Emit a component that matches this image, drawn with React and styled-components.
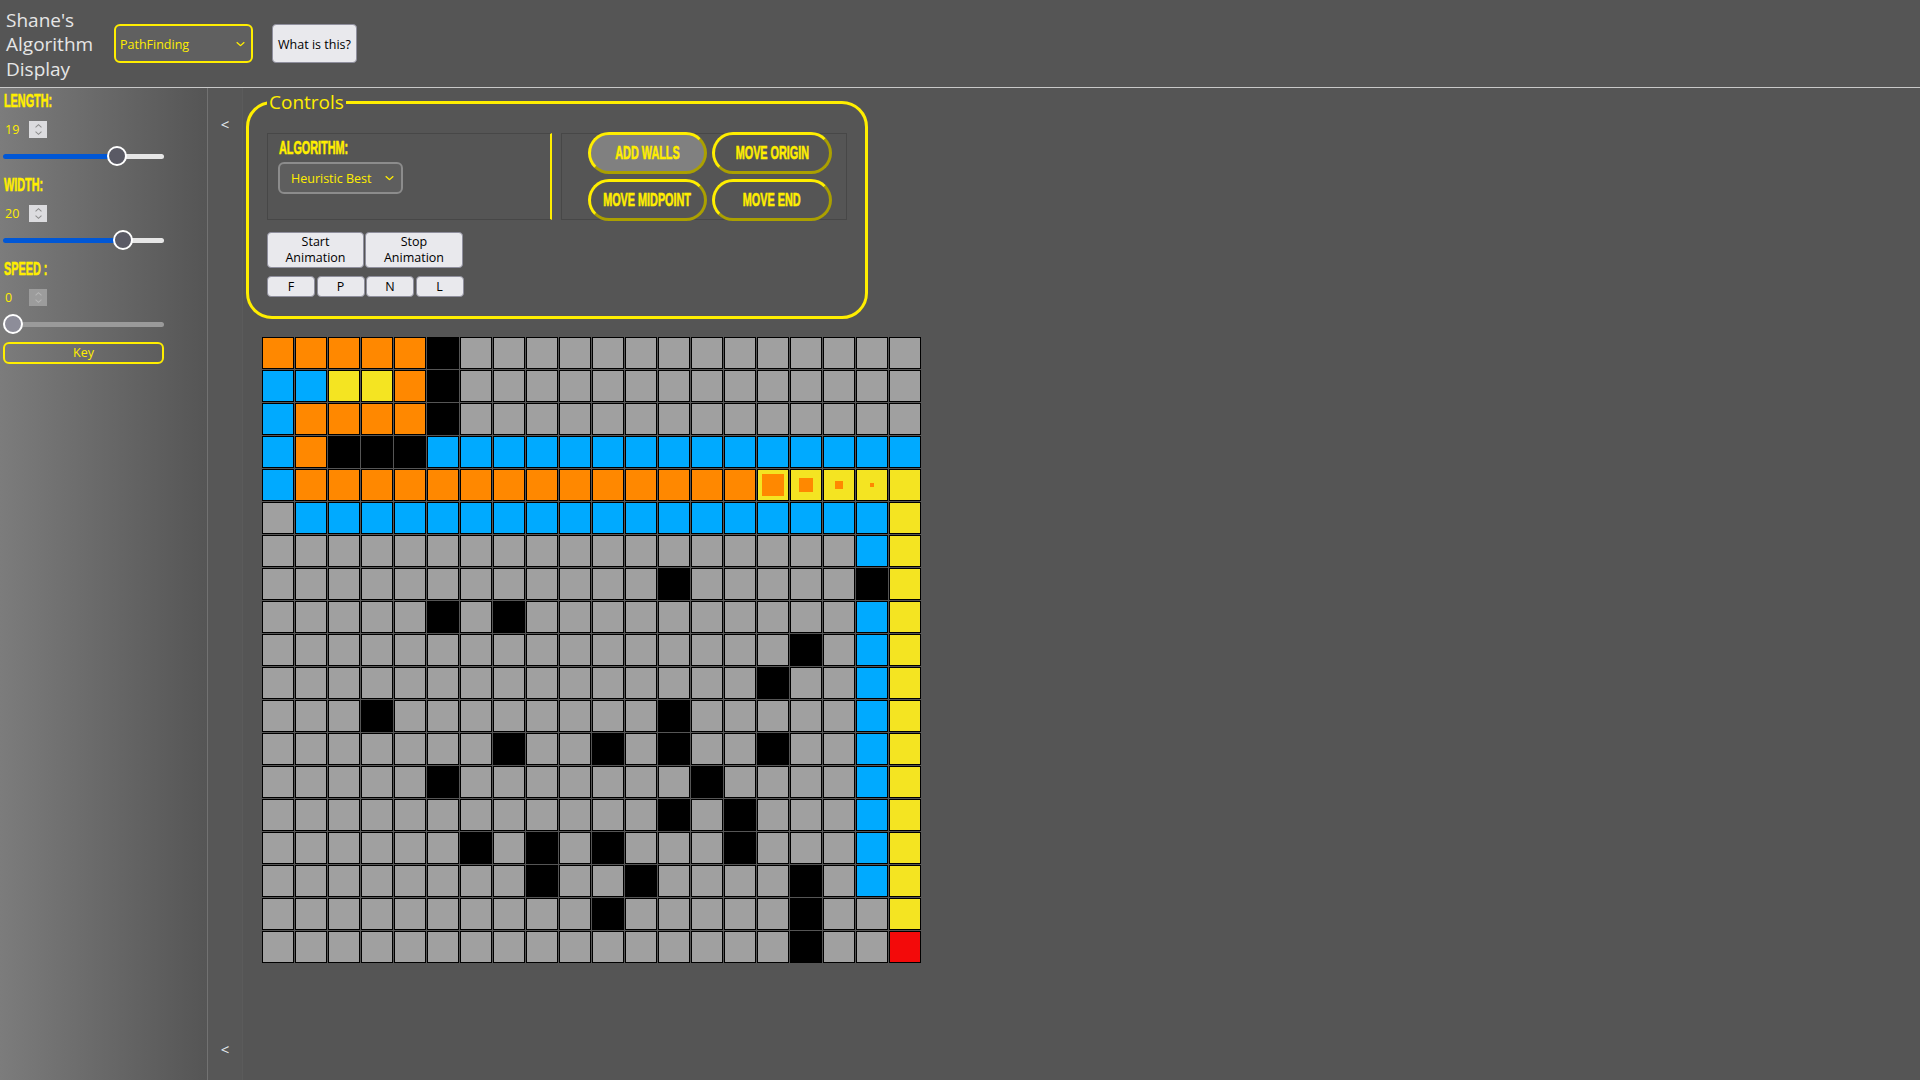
import React from 'react';
import styled, { createGlobalStyle, css } from 'styled-components';

const YELLOW = '#ffee00';

const GlobalStyle = createGlobalStyle`
  html, body {
    margin: 0;
    padding: 0;
    background: #555555;
  }
  body {
    font-family: "Open Sans", "Noto Sans", sans-serif;
    overflow: hidden;
  }
  * { box-sizing: border-box; }
`;

// condensed caps, the page uses a Bebas-like face
const display = css`
  font-family: "Liberation Sans", Arial, sans-serif;
  font-weight: 700;
  font-size: 19px;
  line-height: 20px;
  color: ${YELLOW};
  -webkit-text-stroke: 0.6px ${YELLOW};
`;

const Squeeze = styled.span`
  display: inline-block;
  white-space: nowrap;
  transform: scaleX(${p => p.$x || 0.57});
  transform-origin: ${p => p.$origin || 'left'} center;
`;

const Header = styled.header`
  height: 88px;
  display: flex;
  align-items: center;
  border-bottom: 1px solid #c9c9c9;
`;

const Title = styled.div`
  width: 96px;
  margin: 2px 12px 0 6px;
  color: #e6e6e6;
  font-size: 19px;
  line-height: 24.5px;
`;

const SelectWrap = styled.div`
  position: relative;
  display: inline-block;
  margin-top: ${p => p.$mt || 0}px;

  svg {
    position: absolute;
    right: ${p => p.$arrowRight || 8}px;
    top: 50%;
    transform: translateY(-50%);
    pointer-events: none;
  }
`;

const Select = styled.select`
  appearance: none;
  width: ${p => p.$w}px;
  height: ${p => p.$h}px;
  padding: 1px 20px 0 ${p => p.$pl}px;
  border: 2px solid ${p => p.$border};
  border-radius: 6px;
  background: ${p => p.$bg};
  color: ${YELLOW};
  font-family: "Open Sans", sans-serif;
  font-size: 12.5px;
  outline: none;
`;

const InfoButton = styled.button`
  margin-left: 19px;
  width: 85px;
  height: 39px;
  padding: 1px 0 0;
  background: #e9e9ed;
  border: 1px solid #8f8f9d;
  border-radius: 4px;
  color: #000;
  font-family: "Open Sans", sans-serif;
  font-size: 12.5px;
`;

const Workspace = styled.div`
  display: flex;
  height: calc(100vh - 88px);
`;

const Sidebar = styled.aside`
  width: 207px;
  flex: none;
  padding: 3px 0 0 3px;
  background: linear-gradient(to right, #7c7c7c, #555555);
`;

const Group = styled.div`
  margin-bottom: 9px;
`;

const Label = styled.div`
  ${display};
  height: 20px;
  padding-left: 1px;
`;

const NumberRow = styled.div`
  display: flex;
  align-items: center;
  height: 17px;
  margin-top: 10px;
  padding-left: 2px;
`;

const NumberValue = styled.span`
  width: 24px;
  font-size: 12.5px;
  color: ${YELLOW};
`;

const Spinner = styled.span`
  width: 18px;
  height: 17px;
  display: flex;
  flex-direction: column;
  align-items: center;
  justify-content: center;
  gap: 3px;
  background: ${p => (p.$disabled ? '#9c9c9c' : '#dcdcdf')};
`;

const SliderWrap = styled.div`
  position: relative;
  width: 161px;
  height: 20px;
  margin-top: 8px;
  display: flex;
  align-items: center;
`;

const Track = styled.div`
  width: 100%;
  height: 5px;
  border-radius: 3px;
`;

const Thumb = styled.span`
  position: absolute;
  top: 0;
  width: 20px;
  height: 20px;
  border-radius: 50%;
  border: 2px solid #fff;
  background: ${p => (p.$disabled ? '#8d8d99' : '#5a5a65')};
`;

const KeyButton = styled.button`
  display: block;
  width: 161px;
  height: 22px;
  margin-top: -1px;
  padding: 0;
  border: 2px solid ${YELLOW};
  border-radius: 6px;
  background: transparent;
  color: ${YELLOW};
  font-family: "Open Sans", sans-serif;
  font-size: 12.5px;
  line-height: 16px;
`;

const Rail = styled.div`
  width: 36px;
  flex: none;
  display: flex;
  flex-direction: column;
  justify-content: space-between;
  align-items: center;
  padding: 26px 0 21px;
  border-left: 1px solid #727272;
  border-right: 1px solid #5b5b5b;
  background: #575757;
`;

const RailArrow = styled.span`
  color: #e4eaf0;
  font-size: 15px;
  line-height: 20px;
`;

const Main = styled.main`
  flex: 1;
  padding-left: 3px;
`;

const Controls = styled.fieldset`
  width: 622px;
  min-width: 0;
  margin: 0;
  padding: 17px 18px 19px;
  border: 3px solid ${YELLOW};
  border-radius: 26px;
`;

const Legend = styled.legend`
  padding: 0 2px;
  color: ${YELLOW};
  font-size: 19px;
  line-height: 28px;
`;

const TopRow = styled.div`
  display: flex;
  gap: 9px;
`;

const AlgoBox = styled.div`
  width: 285px;
  height: 87px;
  padding: 4px 0 0 10px;
  border: 1px solid #474747;
  border-right: 2px solid ${YELLOW};
`;

const ModeGrid = styled.div`
  width: 286px;
  height: 87px;
  display: grid;
  grid-template-columns: 119px 120px;
  grid-auto-rows: 42px;
  gap: 5px;
  align-content: center;
  padding-left: 26px;
  border: 1px solid #474747;
`;

const ModeButton = styled.button`
  display: flex;
  align-items: center;
  justify-content: center;
  padding: 0;
  border: 3px outset ${YELLOW};
  border-radius: 21px;
  background: ${p => (p.$active ? '#808080' : 'transparent')};
  ${display};
  overflow: visible;
`;

const AnimRow = styled.div`
  display: flex;
  gap: 1px;
  margin-top: 12px;
`;

const GreyButton = styled.button`
  width: ${p => p.$w}px;
  height: ${p => p.$h}px;
  padding: 0;
  background: #e9e9ed;
  border: 1px solid #8f8f9d;
  border-radius: 4px;
  color: #000;
  font-family: "Open Sans", sans-serif;
  font-size: 12.5px;
  line-height: 16px;
`;

const StepRow = styled.div`
  display: flex;
  gap: 1.5px;
  margin-top: 8px;
`;

const Board = styled.div`
  display: grid;
  grid-template-columns: repeat(20, 32px);
  grid-auto-rows: 32px;
  gap: 1px;
  width: max-content;
  margin: 18px 0 0 16px;
`;

const COLORS = {
  o: '#ff8800',
  b: '#00aaff',
  y: '#f4e422',
  k: '#000000',
  g: '#a0a0a0',
  r: '#f30a0a',
};

const Cell = styled.div`
  display: flex;
  align-items: center;
  justify-content: center;
  border: 1px solid #000;
  background: ${p => COLORS[p.$kind] || COLORS.y};
`;

const Dot = styled.span`
  width: ${p => p.$size}px;
  height: ${p => p.$size}px;
  background: ${COLORS.o};
`;

const DOT_SIZES = { 1: 22, 2: 14, 3: 8, 4: 4 };

const lowerRow = (walls, tail) => {
  const cells = Array(18).fill('g');
  walls.forEach(i => { cells[i] = 'k'; });
  return cells.join('') + tail;
};

const GRID = [
  'ooooo' + 'k' + 'g'.repeat(14),
  'bbyyo' + 'k' + 'g'.repeat(14),
  'boooo' + 'k' + 'g'.repeat(14),
  'bokkk' + 'b'.repeat(15),
  'b' + 'o'.repeat(14) + '1234' + 'y',
  'g' + 'b'.repeat(18) + 'y',
  lowerRow([], 'by'),
  lowerRow([12], 'ky'),
  lowerRow([5, 7], 'by'),
  lowerRow([16], 'by'),
  lowerRow([15], 'by'),
  lowerRow([3, 12], 'by'),
  lowerRow([7, 10, 12, 15], 'by'),
  lowerRow([5, 13], 'by'),
  lowerRow([12, 14], 'by'),
  lowerRow([6, 8, 10, 14], 'by'),
  lowerRow([8, 11, 16], 'by'),
  lowerRow([10, 16], 'gy'),
  lowerRow([16], 'gr'),
];

const Chevron = ({ color = YELLOW, up = false, w = 9, h = 5 }) => (
  <svg width={w} height={h} viewBox="0 0 9 5">
    <path
      d={up ? 'M0.7 4.3 L4.5 0.8 L8.3 4.3' : 'M0.7 0.7 L4.5 4.2 L8.3 0.7'}
      fill="none"
      stroke={color}
      strokeWidth="1.3"
    />
  </svg>
);

const Slider = ({ pct, disabled }) => {
  const stop = 10 + pct * 141;
  const bg = disabled
    ? '#9a9a9a'
    : `linear-gradient(to right, #0057d6 ${stop}px, #e6e6e6 ${stop}px)`;
  return (
    <SliderWrap>
      <Track style={{ background: bg }} />
      <Thumb $disabled={disabled} style={{ left: pct * 141 }} />
    </SliderWrap>
  );
};

const Setting = ({ label, value, pct, disabled }) => (
  <Group>
    <Label><Squeeze>{label}</Squeeze></Label>
    <NumberRow>
      <NumberValue>{value}</NumberValue>
      <Spinner $disabled={disabled}>
        <Chevron up w={7} h={4} color={disabled ? '#b5b5b5' : '#8d8d8d'} />
        <Chevron w={7} h={4} color={disabled ? '#b5b5b5' : '#8d8d8d'} />
      </Spinner>
    </NumberRow>
    <Slider pct={pct} disabled={disabled} />
  </Group>
);

const App = () => (
  <>
    <GlobalStyle />
    <Header>
      <Title>Shane's Algorithm Display</Title>
      <SelectWrap>
        <Select $w={139} $h={39} $pl={4} $border={YELLOW} $bg="#606060" defaultValue="pf">
          <option value="pf">PathFinding</option>
          <option value="sort">Sorting</option>
        </Select>
        <Chevron />
      </SelectWrap>
      <InfoButton>What is this?</InfoButton>
    </Header>

    <Workspace>
      <Sidebar>
        <Setting label="LENGTH:" value="19" pct={0.737} />
        <Setting label="WIDTH:" value="20" pct={0.78} />
        <Setting label="SPEED :" value="0" pct={0} disabled />
        <KeyButton>Key</KeyButton>
      </Sidebar>

      <Rail>
        <RailArrow>&lt;</RailArrow>
        <RailArrow>&lt;</RailArrow>
      </Rail>

      <Main>
        <Controls>
          <Legend>Controls</Legend>
          <TopRow>
            <AlgoBox>
              <Label><Squeeze>ALGORITHM:</Squeeze></Label>
              <SelectWrap $mt={4} $arrowRight={9}>
                <Select $w={125} $h={32} $pl={11} $border="#8c8c8c" $bg="#5e5e5e" defaultValue="hb">
                  <option value="hb">Heuristic Best</option>
                  <option value="bfs">Breadth First</option>
                </Select>
                <Chevron />
              </SelectWrap>
            </AlgoBox>
            <ModeGrid>
              <ModeButton $active><Squeeze $origin="center">ADD WALLS</Squeeze></ModeButton>
              <ModeButton><Squeeze $origin="center">MOVE ORIGIN</Squeeze></ModeButton>
              <ModeButton><Squeeze $origin="center">MOVE MIDPOINT</Squeeze></ModeButton>
              <ModeButton><Squeeze $origin="center">MOVE END</Squeeze></ModeButton>
            </ModeGrid>
          </TopRow>
          <AnimRow>
            <GreyButton $w={97} $h={36}>Start<br />Animation</GreyButton>
            <GreyButton $w={98} $h={36}>Stop<br />Animation</GreyButton>
          </AnimRow>
          <StepRow>
            {['F', 'P', 'N', 'L'].map(s => (
              <GreyButton key={s} $w={48} $h={21}>{s}</GreyButton>
            ))}
          </StepRow>
        </Controls>

        <Board>
          {GRID.map((row, r) =>
            row.split('').map((k, c) => (
              <Cell key={`${r}-${c}`} $kind={k}>
                {DOT_SIZES[k] && <Dot $size={DOT_SIZES[k]} />}
              </Cell>
            ))
          )}
        </Board>
      </Main>
    </Workspace>
  </>
);

export default App;
